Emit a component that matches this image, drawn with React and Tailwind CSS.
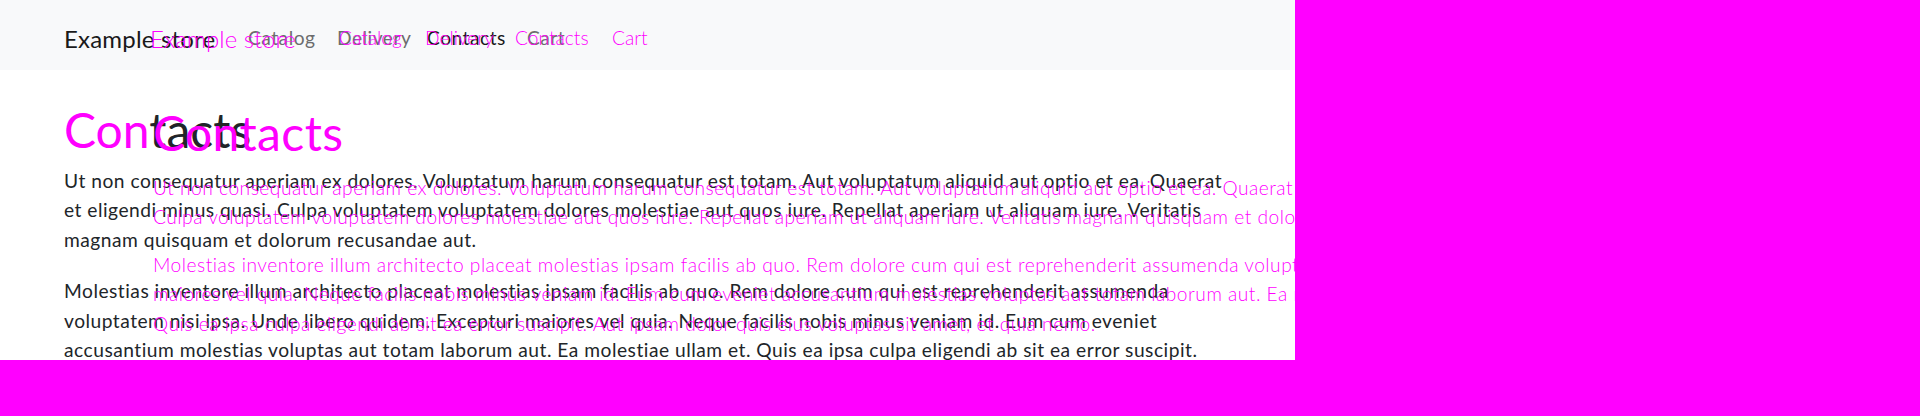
import React from "react";

const BASE_P1 = [
  "Ut non consequatur aperiam ex dolores. Voluptatum harum consequatur est totam. Aut voluptatum aliquid aut optio et ea. Quaerat",
  "et eligendi minus quasi. Culpa voluptatem voluptatem dolores molestiae aut quos iure. Repellat aperiam ut aliquam iure. Veritatis",
  "magnam quisquam et dolorum recusandae aut.",
];
const BASE_P2 = [
  "Molestias inventore illum architecto placeat molestias ipsam facilis ab quo. Rem dolore cum qui est reprehenderit assumenda",
  "voluptatem nisi ipsa. Unde libero quidem. Excepturi maiores vel quia. Neque facilis nobis minus veniam id. Eum cum eveniet",
  "accusantium molestias voluptas aut totam laborum aut. Ea molestiae ullam et. Quis ea ipsa culpa eligendi ab sit ea error suscipit.",
];
const GHOST_P1 = [
  "Ut non consequatur aperiam ex dolores. Voluptatum harum consequatur est totam. Aut voluptatum aliquid aut optio et ea. Quaerat et eligendi minus quasi.",
  "Culpa voluptatem voluptatem dolores molestiae aut quos iure. Repellat aperiam ut aliquam iure. Veritatis magnam quisquam et dolorum recusandae aut.",
];
const GHOST_P2 = [
  "Molestias inventore illum architecto placeat molestias ipsam facilis ab quo. Rem dolore cum qui est reprehenderit assumenda voluptatem nisi ipsa.",
  "maiores vel quia. Neque facilis nobis minus veniam id. Eum cum eveniet accusantium molestias voluptas aut totam laborum aut. Ea molestiae ullam et.",
  "Quis ea ipsa culpa eligendi ab sit ea error suscipit. Aut ipsam dolor quis eius voluptas sit amet, et quia nemo.",
];

const FONT = { fontFamily: "Lato, 'Noto Sans', 'Liberation Sans', sans-serif" };

function Lines({ lines, className }) {
  return (
    <div className={className}>
      {lines.map((l, i) => (
        <div key={i} className="whitespace-nowrap leading-[29.5px] h-[29.5px]">
          {l}
        </div>
      ))}
    </div>
  );
}

function BasePage() {
  return (
    <div className="text-[#212529]">
      <nav className="h-[70px] bg-[#f8f9fa] flex items-center pl-[64px] pt-[7px]">
        <div className="w-[184px] text-[24px] tracking-[0.2px] text-[#1a1a1a]">Example store</div>
        <div className="w-[89px] text-[19.2px] tracking-[0.5px] text-[#6c6c6d]">Catalog</div>
        <div className="w-[90px] text-[19.2px] tracking-[0.5px] text-[#6c6c6d]">Delivery</div>
        <div className="w-[100px] text-[19.2px] tracking-[0.5px] text-[#1a1a1a]">Contacts</div>
        <div className="text-[19.2px] tracking-[0.5px] text-[#6c6c6d]">Cart</div>
      </nav>
      <main className="pl-[64px] pt-[31px]">
        <h1 className="text-[48px] leading-[57.6px] font-normal mb-[7px]">
          <span className="text-[#ff00ff]">Con</span>tacts
        </h1>
        <Lines lines={BASE_P1} className="text-[19.2px] tracking-[0.5px] mb-[22px]" />
        <Lines lines={BASE_P2} className="text-[19.2px] tracking-[0.5px]" />
      </main>
    </div>
  );
}

function GhostPage() {
  return (
    <div className="absolute inset-0 pointer-events-none text-[#ff00ff] font-light">
      <nav className="h-[70px] flex items-center pl-[150px] pt-[7px]">
        <div className="w-[189px] text-[24px]">Example store</div>
        <div className="w-[86px] text-[19.2px]">Catalog</div>
        <div className="w-[90px] text-[19.2px]">Delivery</div>
        <div className="w-[97px] text-[19.2px]">Contacts</div>
        <div className="text-[19.2px]">Cart</div>
      </nav>
      <div className="pl-[153px] pt-[34px]">
        <h1 className="text-[48px] leading-[57.6px] font-normal tracking-[0.4px] mb-[11px]">Contacts</h1>
        <Lines lines={GHOST_P1} className="text-[19.2px] tracking-[0.5px] mb-[18px]" />
        <Lines lines={GHOST_P2} className="text-[19.2px] tracking-[0.5px]" />
      </div>
    </div>
  );
}

export default function App() {
  return (
    <div className="w-[1920px] h-[416px] bg-[#ff00ff] overflow-hidden" style={FONT}>
      <div className="relative w-[1295px] h-[360px] bg-white overflow-hidden">
        <BasePage />
        <GhostPage />
      </div>
    </div>
  );
}
